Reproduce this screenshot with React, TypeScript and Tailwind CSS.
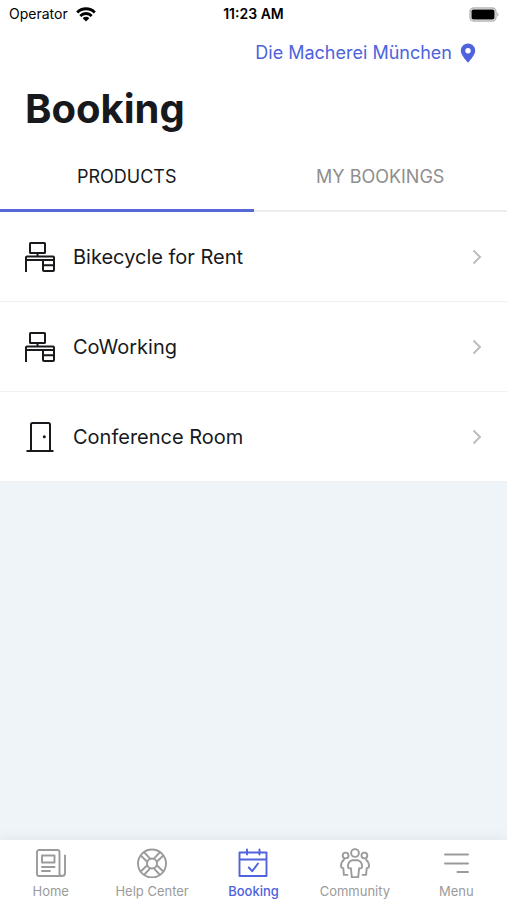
import { useState } from "react";
import type { ReactNode } from "react";
import clsx from "clsx";

const DeskIcon = () => (
  <svg width="30" height="30" viewBox="0 0 30 30" fill="none" stroke="currentColor" strokeWidth="2" strokeLinejoin="round" aria-hidden="true">
    <rect x="5" y="1" width="15" height="10" rx="0.6" />
    <path d="M12.5 11v3.5M1 30V15.5a1 1 0 0 1 1-1h26a1 1 0 0 1 1 1V28a1 1 0 0 1-1 1H19a1 1 0 0 1-1-1V18M1 18h28M18 23.2h11" />
  </svg>
);

const DoorIcon = () => (
  <svg width="30" height="30" viewBox="0 0 30 30" fill="none" stroke="currentColor" strokeWidth="2" aria-hidden="true">
    <path d="M6 29V2.5A1.5 1.5 0 0 1 7.5 1H23.5A1.5 1.5 0 0 1 25 2.5V29M1.5 29h27" />
    <circle cx="19.3" cy="14.8" r="1.5" fill="currentColor" stroke="none" />
  </svg>
);

const NavSvg = ({ children }: { children: ReactNode }) => (
  <svg width="30" height="30" viewBox="0 0 30 30" fill="none" stroke="currentColor" strokeWidth="1.9" strokeLinecap="round" strokeLinejoin="round" aria-hidden="true">
    {children}
  </svg>
);

const PRODUCTS = [
  { label: "Bikecycle for Rent", icon: <DeskIcon /> },
  { label: "CoWorking", icon: <DeskIcon /> },
  { label: "Conference Room", icon: <DoorIcon /> },
];

const TABS = ["PRODUCTS", "MY BOOKINGS"];

const NAV_ITEMS = [
  {
    label: "Home",
    icon: (
      <NavSvg>
        <path d="M23.5 25.5V4A2 2 0 0 0 21.5 2H3a2 2 0 0 0-2 2v22a2 2 0 0 0 2 2h23a3 3 0 0 0 3-3V7.5M23.5 25.500a2.500 2.500 0 0 0 2.500 2.500" />
        <rect x="6" y="7.5" width="12.5" height="7" />
        <path d="M6 19h12.5M6 23h8" />
      </NavSvg>
    ),
  },
  {
    label: "Help Center",
    icon: (
      <NavSvg>
        <circle cx="15" cy="15.5" r="14" />
        <circle cx="15" cy="15.5" r="5" />
        <path d="M10.2 13.800 4 7.800M13.300 10.800 7.400 4.500M19.800 13.800l6.200-6M16.700 10.800 22.600 4.500M10.200 17.200 4 23.200M13.300 20.200 7.400 26.500M19.800 17.200l6.200 6M16.700 20.200 22.600 26.500" />
      </NavSvg>
    ),
  },
  {
    label: "Booking",
    icon: (
      <NavSvg>
        <path d="M1.5 4.5h27v23.5h-27zM1.5 11.5h27M9 1.5v5M21.5 1.5v5M10.8 19.5l3.4 3.7 5.8-7.7" />
      </NavSvg>
    ),
  },
  {
    label: "Community",
    icon: (
      <NavSvg>
        <circle cx="15" cy="5" r="3.9" />
        <circle cx="5.6" cy="7.5" r="2.9" />
        <circle cx="24.4" cy="7.5" r="2.9" />
        <path d="M11.8 12.300h6.400c2.600.8 3.900 3 3.900 6.500 0 1.200-1.400 1.700-3 1.500l-.9 8.900h-6.400l-.9-8.900c-1.600.2-3-.3-3-1.500 0-3.500 1.300-5.700 3.900-6.500z" />
        <path d="M4 11.800C1.900 13.200 1 15.600 1 18.300c0 1 .9 1.700 2.300 1.800l.6 6.800h3.500M26 11.800c2.100 1.400 3 3.800 3 6.500 0 1-.9 1.700-2.300 1.800l-.6 6.800h-3.500" />
      </NavSvg>
    ),
  },
  {
    label: "Menu",
    icon: (
      <NavSvg>
        <path d="M4 6.500h23M4 15.500h23M16.500 24H27" />
      </NavSvg>
    ),
  },
];

function StatusBar() {
  return (
    <div className="grid h-7 grid-cols-3 items-center px-2 text-sm text-black">
      <div className="flex items-center gap-2 pl-px">
        <span>Operator</span>
        <svg width="20" height="15" viewBox="0 0 20 15" fill="none" stroke="currentColor" strokeWidth="2.8" aria-label="Wi-Fi">
          <path d="M1.2 5.4a12.4 12.4 0 0 1 17.6 0M4.3 8.9a8 8 0 0 1 11.4 0" />
          <path d="M6.7 11.200a4.600 4.600 0 0 1 6.600 0L10 14.500z" fill="currentColor" stroke="none" />
        </svg>
      </div>
      <span className="text-center font-semibold">11:23 AM</span>
      <svg className="justify-self-end" width="30" height="15" viewBox="0 0 30 15" aria-label="Battery">
        <rect x="1" y="1" width="26" height="13" rx="3.8" fill="#fff" stroke="#b5b5b5" strokeWidth="1.4" />
        <rect x="2.5" y="2.5" width="23" height="10" rx="1.8" fill="#000" />
        <path d="M28.2 5.2a2.5 2.5 0 0 1 0 4.4z" fill="#b5b5b5" />
      </svg>
    </div>
  );
}

export default function App() {
  const [activeTab, setActiveTab] = useState("PRODUCTS");

  return (
    <div className="flex min-h-screen flex-col bg-[#eef4f8] font-['Inter',sans-serif] text-[#17191c]">
      <header className="bg-white">
        <StatusBar />
        <div className="flex h-[50px] items-center justify-end px-[31px]">
          <button className="flex items-center gap-2 text-lg text-[#4e63dc]">
            Die Macherei München
            <svg width="16" height="20" viewBox="0 0 16 20" fill="currentColor" aria-hidden="true">
              <path fillRule="evenodd" d="M8 .5a7.200 7.200 0 0 0-7.200 7.200C.8 12.500 8 19.500 8 19.500s7.200-7 7.200-11.800A7.200 7.200 0 0 0 8 .5zm0 4.600a2.700 2.700 0 1 1 0 5.400 2.700 2.700 0 0 1 0-5.400z" />
            </svg>
          </button>
        </div>
        <h1 className="px-[25px] text-[40px] leading-[62px] font-bold">Booking</h1>
        <div role="tablist" className="grid h-[72px] grid-cols-2">
          {TABS.map((tab) => (
            <button
              key={tab}
              role="tab"
              aria-selected={activeTab === tab}
              onClick={() => setActiveTab(tab)}
              className={clsx(
                "pt-1 text-lg",
                activeTab === tab
                  ? "border-b-3 border-[#5668d8]"
                  : "border-b-2 border-[#ededee] text-[#8e8e8e]"
              )}
            >
              {tab}
            </button>
          ))}
        </div>
      </header>

      <main className="flex-1">
        <ul>
          {PRODUCTS.map((product) => (
            <li key={product.label}>
              <button className="flex h-[90px] w-full items-center border-b border-[#f0f1f3] bg-white pr-6 pl-[25px] text-left">
                {product.icon}
                <span className="ml-[18px] flex-1 text-xl">{product.label}</span>
                <svg width="12" height="16" viewBox="0 0 12 16" fill="none" stroke="#bdbdbd" strokeWidth="2" aria-hidden="true">
                  <path d="M2.5 1.500 9 8l-6.500 6.500" />
                </svg>
              </button>
            </li>
          ))}
        </ul>
      </main>

      <nav className="sticky bottom-0 grid grid-cols-5 bg-white pt-2 pb-px shadow-[0_-2px_12px_rgba(0,0,0,0.06)]">
        {NAV_ITEMS.map((item) => (
          <a
            key={item.label}
            href="#"
            className={clsx(
              "flex flex-col items-center gap-[5px] text-[13px] leading-4 whitespace-nowrap",
              item.label === "Booking" ? "font-medium text-[#4e63dc]" : "text-[#9b9b9b]"
            )}
          >
            {item.icon}
            {item.label}
          </a>
        ))}
      </nav>
    </div>
  );
}
